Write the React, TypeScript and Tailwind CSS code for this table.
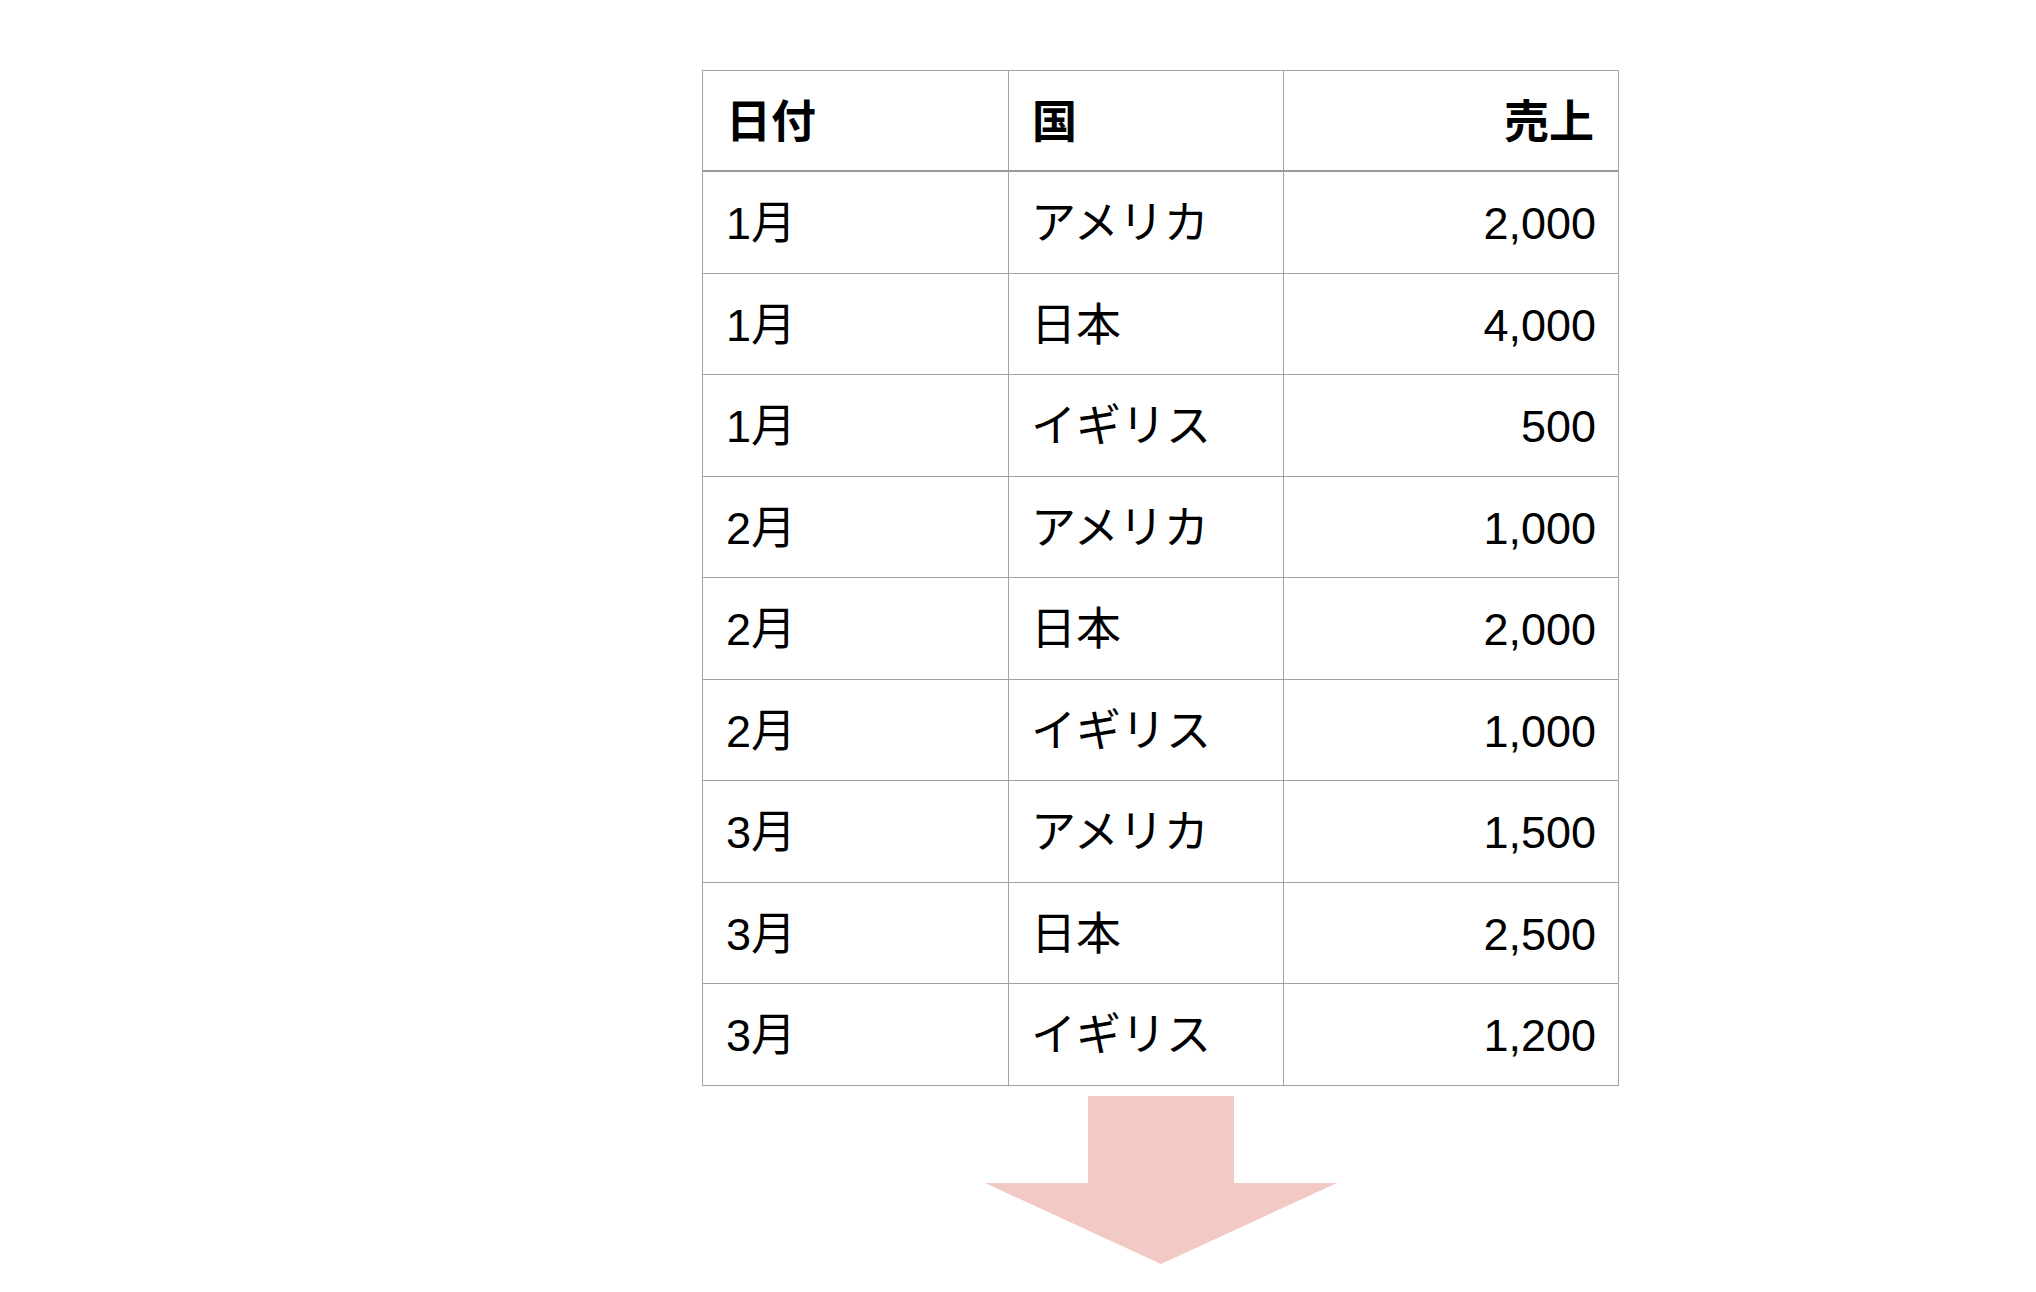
const rows = [
  { month: "1月", country: "アメリカ", sales: "2,000" },
  { month: "1月", country: "日本", sales: "4,000" },
  { month: "1月", country: "イギリス", sales: "500" },
  { month: "2月", country: "アメリカ", sales: "1,000" },
  { month: "2月", country: "日本", sales: "2,000" },
  { month: "2月", country: "イギリス", sales: "1,000" },
  { month: "3月", country: "アメリカ", sales: "1,500" },
  { month: "3月", country: "日本", sales: "2,500" },
  { month: "3月", country: "イギリス", sales: "1,200" },
];

const font = "font-['Liberation_Sans','Noto_Sans_CJK_JP',sans-serif]";

export default function App() {
  return (
    <div className={`min-h-[1292px] bg-white text-black pt-[70px] pl-[702px] ${font}`}>
      {/* Sales table */}
      <div className="grid w-[917px] grid-cols-[306px_275px_335px] border-t border-l border-[#a3a3a3] text-[45px] leading-none">
        <div className="flex h-[101px] items-center border-r border-b-2 border-r-[#a3a3a3] border-b-[#999] pt-[3px] pl-[23px] font-bold">
          日付
        </div>
        <div className="flex h-[101px] items-center border-r border-b-2 border-r-[#a3a3a3] border-b-[#999] pt-[3px] pl-[23px] font-bold">
          国
        </div>
        <div className="flex h-[101px] items-center justify-end border-r border-b-2 border-r-[#a3a3a3] border-b-[#999] pt-[3px] pr-[24px] font-bold">
          売上
        </div>

        {rows.map((r, i) => (
          <div key={i} className="contents">
            <div className="flex h-[101.5px] items-center border-r border-b border-[#a3a3a3] pt-[3px] pl-[23px]">
              {r.month}
            </div>
            <div className="flex h-[101.5px] items-center border-r border-b border-[#a3a3a3] pt-[3px] pl-[22px]">
              {r.country}
            </div>
            <div className="flex h-[101.5px] items-center justify-end border-r border-b border-[#a3a3a3] pt-[3px] pr-[22px]">
              {r.sales}
            </div>
          </div>
        ))}
      </div>

      {/* Down arrow */}
      <svg
        className="mt-[10px] ml-[283px] block"
        width="352"
        height="168"
        viewBox="0 0 352 168"
      >
        <rect x="103" y="0" width="146" height="88" fill="#f2c9c5" />
        <polygon points="0,87 352,87 176,168" fill="#f2c9c5" />
      </svg>
    </div>
  );
}
